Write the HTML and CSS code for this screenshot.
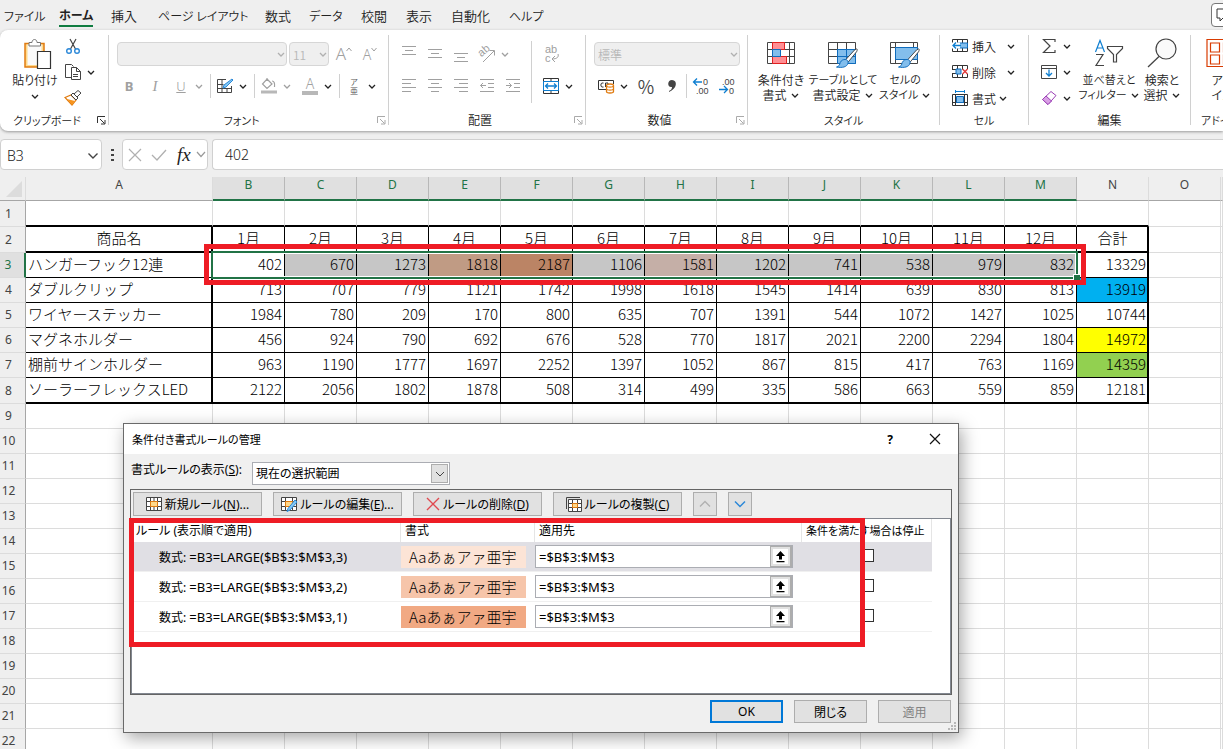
FILE: index.html
```html
<!DOCTYPE html>
<html lang="ja">
<head>
  <meta charset="UTF-8">
  <title>条件付き書式ルールの管理</title>
  <link rel="stylesheet" href="styles.css">
</head>
<body>

  <svg class="defs" aria-hidden="true">
    <symbol id="chev" viewBox="0 0 10 10"><path d="M2 4l3 3 3-3" fill="none" stroke="currentColor" stroke-width="1.3"/></symbol>
    <symbol id="launch" viewBox="0 0 9 9"><path d="M.5 7V.5H8M3 3l4.500 4.500M8 4v4H4" fill="none" stroke="currentColor"/></symbol>
    <symbol id="brush" viewBox="0 0 24 22"><path d="M22 1c1 0 1 1 0 3L13 15l-3-2L20 2z" fill="#fff" stroke="#444"/><path d="M10 12c2 0 4 2 3 4-1 4-6 5-12 4 3-1 3-2 4-5 1-2 3-3 5-3z" fill="#83beec" stroke="#0f6cbd"/></symbol>
    <symbol id="collapse" viewBox="0 0 15 15"><path d="M0 0h15v15H0z" fill="#fff"/><path d="M7.500 2L12 7H9v3.500H6V7H3zM3.500 12h8v1.300h-8z" fill="#000"/></symbol>
  </svg>

  <nav class="tabs">
    <button class="kana">ファイル</button>
    <button class="active kana">ホーム</button>
    <button>挿入</button>
    <button class="kana">ページ レイアウト</button>
    <button>数式</button>
    <button class="kana">データ</button>
    <button>校閲</button>
    <button>表示</button>
    <button>自動化</button>
    <button class="kana">ヘルプ</button>
    <button class="comment" aria-label="コメント">
      <svg width="16" height="14" viewBox="0 0 16 14"><path d="M1 1h14v9H7l-3 3v-3H1z" fill="none" stroke="#333"/></svg>
    </button>
  </nav>

  <section class="ribbon">
    <div class="group clipboard">
      <div class="body">
        <button class="big">
          <svg width="34" height="32" viewBox="0 0 34 32"><path d="M7 8.500h19V32H7z" fill="#ffd98c" stroke="#e07b10" stroke-width="1.500"/><path d="M9.500 9.500h14V30h-14z" fill="#fafafa"/><path d="M11 11V7.500h3c0-4 5-4 5 0h3.500V11z" fill="#fff" stroke="#777"/><path d="M19.500 16.500h13v17h-13z" fill="#fff" stroke="#333" stroke-width="1.200"/></svg>
          <span>貼り付け</span>
          <svg class="chev"><use href="#chev"/></svg>
        </button>
        <div class="stack">
          <div class="line"><button class="ic" aria-label="切り取り"><svg width="16" height="18" viewBox="0 0 16 18"><path d="M5 2l5.500 10M11 2L5.500 12" stroke="#444" stroke-width="1.200"/><circle cx="4" cy="14" r="2.300" fill="none" stroke="#2b88d8" stroke-width="1.400"/><circle cx="12" cy="14" r="2.300" fill="none" stroke="#2b88d8" stroke-width="1.400"/></svg></button></div>
          <div class="line"><button class="ic" aria-label="コピー"><svg width="18" height="18" viewBox="0 0 18 18"><path d="M7 14.500H1.500v-13h6l2 2" fill="none" stroke="#444"/><path d="M7.500 4.500h5l4 4v8h-9zM12.500 4.500v4h4M9 11.500h5M9 13.500h5" fill="none" stroke="#444"/></svg></button><button class="chv" aria-label="コピーの種類"><svg class="chev"><use href="#chev"/></svg></button></div>
          <div class="line"><button class="ic" aria-label="書式のコピー"><svg width="18" height="16" viewBox="0 0 18 16"><path d="M1 7.500L7 5l5 5-4 5z" fill="#fff" stroke="#e07b10" stroke-width="1.200"/><path d="M3 9l8 2-3 4z" fill="#f7941d"/><path d="M7 5l2-2 5 5-2 2zM10 4l4-3.500 3 2.500-4 4z" fill="#fff" stroke="#444"/></svg></button></div>
        </div>
      </div>
      <div class="name kana">クリップボード<button class="launch dark" aria-label="クリップボードの設定"><svg width="9" height="9"><use href="#launch"/></svg></button></div>
    </div>

    <div class="group font">
      <div class="rows">
        <div class="line">
          <div class="combo wide"><select disabled aria-label="フォント"><option></option></select><svg class="chev"><use href="#chev"/></svg></div>
          <div class="combo size"><select disabled aria-label="サイズ"><option>11</option></select><svg class="chev"><use href="#chev"/></svg></div>
          <button class="ic off lt big-a">A<svg width="6" height="5" viewBox="0 0 6 5"><path d="M.5 4L3 1l2.500 3" fill="none" stroke="currentColor"/></svg></button>
          <button class="ic off lt small-a">A<svg width="6" height="5" viewBox="0 0 6 5"><path d="M.5 1L3 4l2.500-3" fill="none" stroke="currentColor"/></svg></button>
        </div>
        <div class="line tools">
          <button class="ic off lt"><b>B</b></button>
          <button class="ic off serif"><i>I</i></button>
          <button class="ic off lt"><u>U</u></button>
          <button class="chv off" aria-label="下線の種類"><svg class="chev"><use href="#chev"/></svg></button>
          <span class="sep"></span>
          <button class="ic" aria-label="罫線"><svg width="18" height="16" viewBox="0 0 18 16"><path d="M10 1.500H1.500v13h14V8M1.500 6.500h6M6 1.500v13M1.500 10.500h14M11 10v4.500" fill="none" stroke="#444"/><path d="M16 1l1 1-7 7-3 1 1-3z" fill="#83c8f4" stroke="#2b88d8"/></svg></button>
          <button class="chv" aria-label="罫線の種類"><svg class="chev"><use href="#chev"/></svg></button>
          <span class="sep"></span>
          <button class="ic off" aria-label="塗りつぶし"><svg width="18" height="18" viewBox="0 0 18 18"><path d="M7 2l5 5-5 4.500L2.500 7zM7 4V1M12 4c2 0 3 2 2.500 6" fill="none" stroke="currentColor" stroke-width="1.200"/><path d="M1 13.500h16v3H1z" fill="#b8b8b8"/></svg></button>
          <button class="chv off" aria-label="塗りつぶしの色"><svg class="chev"><use href="#chev"/></svg></button>
          <button class="ic off lt fontcolor">A</button>
          <button class="chv" aria-label="フォントの色"><svg class="chev"><use href="#chev"/></svg></button>
          <span class="sep"></span>
          <button class="ic ruby"><span>ア</span><span>亜</span></button>
          <button class="chv" aria-label="ふりがなの設定"><svg class="chev"><use href="#chev"/></svg></button>
        </div>
      </div>
      <div class="name kana">フォント<button class="launch" aria-label="フォントの設定"><svg width="9" height="9"><use href="#launch"/></svg></button></div>
    </div>

    <div class="group align">
      <div class="rows">
        <div class="line tools">
          <button class="ic off" aria-label="上揃え"><svg width="16" height="18" viewBox="0 0 16 18"><path d="M1 1.500h14M4 5.500h8M1 9.500h14" stroke="currentColor"/></svg></button>
          <button class="ic off" aria-label="上下中央揃え"><svg width="16" height="18" viewBox="0 0 16 18"><path d="M1 4.500h14M4 8.500h8M1 12.500h14" stroke="currentColor"/></svg></button>
          <button class="ic off" aria-label="下揃え"><svg width="16" height="18" viewBox="0 0 16 18"><path d="M1 8.500h14M4 12.500h8M1 16.500h14" stroke="currentColor"/></svg></button>
          <button class="ic off" aria-label="方向"><svg class="glyphs" width="18" height="18" viewBox="0 0 18 18"><text x="0" y="9" font-size="11" fill="currentColor" transform="rotate(-40 6 6)">ab</text><path d="M5 17L16 6M11.500 5.500h5v5" fill="none" stroke="currentColor"/></svg></button>
          <button class="chv off" aria-label="方向の種類"><svg class="chev"><use href="#chev"/></svg></button>
        </div>
        <div class="line tools">
          <button class="ic off" aria-label="左揃え"><svg width="16" height="16" viewBox="0 0 16 16"><path d="M1 1.500h14M1 5.500h9M1 9.500h14M1 13.500h9" stroke="currentColor"/></svg></button>
          <button class="ic off" aria-label="中央揃え"><svg width="16" height="16" viewBox="0 0 16 16"><path d="M1 1.500h14M4 5.500h8M1 9.500h14M4 13.500h8" stroke="currentColor"/></svg></button>
          <button class="ic off" aria-label="右揃え"><svg width="16" height="16" viewBox="0 0 16 16"><path d="M1 1.500h14M6 5.500h9M1 9.500h14M6 13.500h9" stroke="currentColor"/></svg></button>
          <button class="ic off" aria-label="インデントを減らす"><svg width="16" height="16" viewBox="0 0 16 16"><path d="M1 1.500h14M9 5.500h6M9 9.500h6M1 13.500h14M7 7.500H1.500M4 5L1.500 7.500 4 10" fill="none" stroke="currentColor"/></svg></button>
          <button class="ic off" aria-label="インデントを増やす"><svg width="16" height="16" viewBox="0 0 16 16"><path d="M1 1.500h14M9 5.500h6M9 9.500h6M1 13.500h14M1 7.500h5.500M4 5l2.500 2.500L4 10" fill="none" stroke="currentColor"/></svg></button>
        </div>
      </div>
      <span class="sep tall"></span>
      <div class="rows merge">
        <div class="line"><button class="ic off" aria-label="折り返して全体を表示する"><svg class="glyphs" width="18" height="18" viewBox="0 0 18 18"><text x="3" y="8" font-size="11" fill="currentColor">ab</text><text x="3" y="17" font-size="11" fill="currentColor">c</text><path d="M16 9c1 3-1 5-6 5M13 11l-3 3 3 3" fill="none" stroke="currentColor"/></svg></button></div>
        <div class="line"><button class="ic" aria-label="セルを結合して中央揃え"><svg width="16" height="16" viewBox="0 0 16 16"><path d="M.5.5h15v15H.5zM8 0v4M8 12v4" fill="none" stroke="#333"/><path d="M.5 3.500h15v9H.5z" fill="#fff" stroke="#0f7fd1"/><path d="M2.500 8h11M5 5.500L2.500 8 5 10.500M11 5.500L13.500 8 11 10.500" fill="none" stroke="#0f7fd1" stroke-width="1.300"/></svg></button><button class="chv" aria-label="結合の種類"><svg class="chev"><use href="#chev"/></svg></button></div>
      </div>
      <div class="name">配置<button class="launch" aria-label="配置の設定"><svg width="9" height="9"><use href="#launch"/></svg></button></div>
    </div>

    <div class="group number">
      <div class="rows">
        <div class="line"><div class="combo format"><select disabled aria-label="表示形式"><option>標準</option></select><svg class="chev"><use href="#chev"/></svg></div></div>
        <div class="line">
          <button class="ic" aria-label="通貨表示形式"><svg width="18" height="16" viewBox="0 0 18 16"><path d="M9 11.500H1.500v-9h15V6" fill="none" stroke="#333"/><path d="M6.500 5H5C3.500 5 3.500 9 5 9h1.500M8.500 9V5H11v2" fill="none" stroke="#333"/><path d="M9.500 7.500c0-2 7-2 7 0v6c0 2-7 2-7 0zM9.500 8c1 1.500 6 1.500 7 0M9.500 11c1 1.500 6 1.500 7 0" fill="#fff" stroke="#e07b10" stroke-width="1.300"/></svg></button>
          <button class="chv" aria-label="通貨の種類"><svg class="chev"><use href="#chev"/></svg></button>
          <button class="ic percent">%</button>
          <button class="ic" aria-label="桁区切り"><svg width="10" height="14" viewBox="0 0 10 14"><path d="M5 1c6 0 5 9-3 12v-1c2-1 3-2 3-4-5 1-5-7 0-7z" fill="#444"/></svg></button>
          <span class="sep"></span>
          <button class="ic" aria-label="小数点以下の表示桁数を増やす"><svg class="glyphs" width="18" height="18" viewBox="0 0 18 18"><text x="11" y="8" font-size="9" fill="#444">0</text><text x="4" y="17" font-size="9" fill="#444">.00</text><path d="M1.500 5H10M5 1.500L1.500 5 5 8.500" fill="none" stroke="#0f7fd1" stroke-width="1.300"/></svg></button>
          <button class="ic" aria-label="小数点以下の表示桁数を減らす"><svg class="glyphs" width="18" height="18" viewBox="0 0 18 18"><text x="4" y="8" font-size="9" fill="#444">.00</text><text x="11" y="17" font-size="9" fill="#444">0</text><path d="M1 12.500h8.500M6 9l3.500 3.500L6 16" fill="none" stroke="#0f7fd1" stroke-width="1.300"/></svg></button>
        </div>
      </div>
      <div class="name">数値<button class="launch" aria-label="数値の設定"><svg width="9" height="9"><use href="#launch"/></svg></button></div>
    </div>

    <div class="group style">
      <div class="body">
        <button class="big">
          <svg width="30" height="32" viewBox="0 0 30 32"><path d="M1.500 7.500h27v21h-27zM1.500 14.500h27M1.500 21.500h27M6.500 7.500v21M23.500 7.500v21" fill="#fff" stroke="#444"/><path d="M6.500 7.500h12v7h-12zM6.500 21.500h14v7h-14z" fill="#ff8f94" stroke="#e02020"/><path d="M6.500 14.500h8v7h-8z" fill="#83beec" stroke="#0f6cbd"/></svg>
          <span>条件付き</span><span>書式<svg class="chev"><use href="#chev"/></svg></span>
        </button>
        <button class="big">
          <svg width="32" height="32" viewBox="0 0 32 32"><path d="M1.500 7.500h27v21h-27z" fill="#fff" stroke="#444"/><path d="M10.500 14.500h18v14h-18z" fill="#83beec"/><path d="M1.500 14.500h27M1.500 21.500h27M10.500 7.500v21M19.500 7.500v21" stroke="#444"/><path d="M10.500 14.500h18v14h-18M10.500 21.500h18M10.500 14v14M19.500 14v14" fill="none" stroke="#0f6cbd"/><use href="#brush" x="8" y="13" width="24" height="21"/></svg>
          <span class="kana">テーブルとして</span><span>書式設定<svg class="chev"><use href="#chev"/></svg></span>
        </button>
        <button class="big">
          <svg width="32" height="32" viewBox="0 0 32 32"><path d="M1.500 7.500h27v21h-27zM1.500 12.500h27M6.500 7.500v21M24.500 7.500v5" fill="#fff" stroke="#444"/><path d="M6.500 12.500h22v12h-22z" fill="#83beec" stroke="#0f6cbd"/><use href="#brush" x="8" y="13" width="24" height="21"/></svg>
          <span class="kana">セルの</span><span class="kana">スタイル<svg class="chev"><use href="#chev"/></svg></span>
        </button>
      </div>
      <div class="name kana">スタイル</div>
    </div>

    <div class="group cells">
      <div class="stack">
        <div class="line"><button class="text"><svg width="16" height="16" viewBox="0 0 16 16"><path d="M.5 1.500h15v12H.5zM.5 5.500h15M.5 9.500h15M5.500 1.500v12M10.500 1.500v12" fill="none" stroke="#333"/><path d="M5.500 5h10v5h-10z" fill="#83beec" stroke="#0f6cbd"/><path d="M0 4.500h8v6H0z" fill="#fff"/><path d="M1 7.500h8M4 4.500l-3 3 3 3" fill="none" stroke="#0f7fd1" stroke-width="1.300"/></svg>挿入</button><button class="chv gap" aria-label="挿入の種類"><svg class="chev"><use href="#chev"/></svg></button></div>
        <div class="line"><button class="text"><svg width="16" height="16" viewBox="0 0 16 16"><path d="M.5 5V1.500h15V5M.5 10v3.500h15V10M5.500 1.500v12M10.500 1.500v4M10.500 10v3.500M0 5.500h5M0 9.500h5" fill="none" stroke="#333"/><path d="M4 5h5v5H4z" fill="#83beec" stroke="#0f6cbd"/><path d="M10.500 5l5 5M15.500 5l-5 5" stroke="#e03a3a" stroke-width="1.400"/></svg>削除</button><button class="chv gap" aria-label="削除の種類"><svg class="chev"><use href="#chev"/></svg></button></div>
        <div class="line"><button class="text"><svg width="16" height="16" viewBox="0 0 16 16"><path d="M3.500 0v3M12.500 0v3M3.500 1.500h9" stroke="#0f7fd1"/><path d="M.5 4.500h15v11H.5zM.5 12.500h15M3.500 4.500v11M12.500 4.500v11" fill="none" stroke="#333"/><path d="M4.500 6.500h7v6h-7z" fill="#83beec" stroke="#0f6cbd"/></svg>書式<svg class="chev"><use href="#chev"/></svg></button></div>
      </div>
      <div class="name kana">セル</div>
    </div>

    <div class="group edit">
      <div class="body">
        <div class="stack">
          <div class="line"><button class="ic" aria-label="合計"><svg width="16" height="16" viewBox="0 0 16 16"><path d="M14 4V1.500H2.500L9 8l-6.500 6.500H14V12" fill="none" stroke="#444" stroke-width="1.200"/></svg></button><button class="chv" aria-label="集計の種類"><svg class="chev"><use href="#chev"/></svg></button></div>
          <div class="line"><button class="ic" aria-label="フィル"><svg width="16" height="16" viewBox="0 0 16 16"><path d="M.5 1.500h15v13H.5zM.5 4.500h15" fill="none" stroke="#444"/><path d="M8 5.500V12M5 9l3 3 3-3" fill="none" stroke="#0f7fd1" stroke-width="1.300"/></svg></button><button class="chv" aria-label="フィルの種類"><svg class="chev"><use href="#chev"/></svg></button></div>
          <div class="line"><button class="ic" aria-label="クリア"><svg width="16" height="16" viewBox="0 0 16 16"><path d="M10 1.500l5 4-8 9-5.500-5z" fill="#fff" stroke="#9b3fb5"/><path d="M5 6l5.500 5L7 14.500l-5.500-5z" fill="#d9a0e5" stroke="#9b3fb5"/></svg></button><button class="chv" aria-label="クリアの種類"><svg class="chev"><use href="#chev"/></svg></button></div>
        </div>
        <button class="big">
          <svg width="30" height="32" viewBox="0 0 30 32"><path d="M1.500 17L6 5.500l4.500 11.500M3 13h6" fill="none" stroke="#0f7fd1" stroke-width="1.200"/><path d="M2 19.500h7L2 30.500h8" fill="none" stroke="#444" stroke-width="1.200"/><path d="M13.500 11.500h15v2l-6 6V27h-3v-7.500l-6-6z" fill="#fff" stroke="#444" stroke-width="1.200"/></svg>
          <span class="kana">並べ替えと</span><span class="kana">フィルター<svg class="chev"><use href="#chev"/></svg></span>
        </button>
        <button class="big narrow">
          <svg width="30" height="32" viewBox="0 0 30 32"><circle cx="19" cy="14" r="10" fill="#fafafa" stroke="#444" stroke-width="1.200"/><path d="M12 21.500L1 32" stroke="#444" stroke-width="1.300"/></svg>
          <span>検索と</span><span>選択<svg class="chev"><use href="#chev"/></svg></span>
        </button>
      </div>
      <div class="name">編集</div>
    </div>

    <div class="group addin">
      <div class="body">
        <button class="big">
          <svg width="30" height="32" viewBox="0 0 30 32"><path d="M0 4.500h27v27H0zM3.500 8h9v9h-9zM3.500 20h9v9h-9zM16.500 20h9v9h-9zM16.500 8h9v9h-9z" fill="none" stroke="#d83b01" stroke-width="1.200"/></svg>
          <span>アド</span><span>イン</span>
        </button>
      </div>
      <div class="name kana">アドイン</div>
    </div>
  </section>

  <section class="formula">
    <div class="namebox"><input type="text" value="B3" aria-label="名前ボックス"><svg width="12" height="8" viewBox="0 0 12 8"><path d="M1.500 1.500L6 6l4.500-4.500" fill="none" stroke="#444" stroke-width="1.400"/></svg></div>
    <span class="dots"></span>
    <div class="fx">
      <button aria-label="キャンセル"><svg width="14" height="14" viewBox="0 0 14 14"><path d="M1 1l12 12M13 1L1 13" stroke="#b0b0b0" stroke-width="1.200"/></svg></button>
      <button aria-label="入力"><svg width="16" height="12" viewBox="0 0 16 12"><path d="M1 6l5 5L15 1" fill="none" stroke="#b0b0b0" stroke-width="1.300"/></svg></button>
      <button class="fn"><i>fx</i><svg width="10" height="7" viewBox="0 0 10 7"><path d="M1 1l4 4.500L9 1" fill="none" stroke="#999" stroke-width="1.200"/></svg></button>
    </div>
    <input class="value" type="text" value="402" aria-label="数式バー">
  </section>

  <main class="sheet">
    <table class="grid">
      <colgroup id="cols"></colgroup>
      <thead><tr id="letters"></tr></thead>
      <tbody id="rows"></tbody>
    </table>
    <div class="selection"></div>
    <div class="marker row-marker"></div>
  </main>

  <div class="dialog" role="dialog" aria-labelledby="dialogTitle">
    <header class="titlebar">
      <span class="kana" id="dialogTitle">条件付き書式ルールの管理</span>
      <button class="help">?</button>
      <button class="close" aria-label="閉じる"><svg width="12" height="12" viewBox="0 0 12 12"><path d="M1 1l10 10M11 1L1 11" stroke="#111" stroke-width="1.200"/></svg></button>
    </header>

    <div class="scope">
      <label for="scope">書式ルールの表示(<u>S</u>):</label>
      <div class="picker">
        <select id="scope"><option>現在の選択範囲</option></select>
        <span class="arrow"><svg width="10" height="6" viewBox="0 0 10 6"><path d="M1 1l4 4 4-4" fill="none" stroke="#444"/></svg></span>
      </div>
    </div>

    <div class="frame">
      <div class="toolbar">
        <button><svg width="16" height="15" viewBox="0 0 16 15"><path d="M.5.5h15v13H.5zM.5 4.500h15M.5 9.500h15M4.500.5v13M11.500.5v13M8 .5v4M8 9.500v4" fill="#fff" stroke="#444"/><path d="M4.500 4.500h7v5h-7z" fill="#ffd98c" stroke="#e07b10"/></svg>新規ルール(<u>N</u>)...</button>
        <button><svg width="16" height="15" viewBox="0 0 16 15"><path d="M.5.5h15v13H.5zM.5 4.500h15M.5 9.500h15M4.500.5v13M11.500.5v13" fill="#fff" stroke="#444"/><path d="M4.500 4.500h7v5h-7z" fill="#ffd98c" stroke="#e07b10"/><path d="M14 3l2 2-7 8-3 1.500 1-3z" fill="#83c8f4" stroke="#2b88d8"/></svg>ルールの編集(<u>E</u>)...</button>
        <button><svg width="14" height="14" viewBox="0 0 14 14"><path d="M1 1l12 12M13 1L1 13" stroke="#e04a50" stroke-width="1.400"/></svg>ルールの削除(<u>D</u>)</button>
        <button><svg width="16" height="15" viewBox="0 0 16 15"><path d="M.5 12V.5H14" fill="none" stroke="#444"/><path d="M2.500 2.500h13v12h-13zM2.500 6.500h13M2.500 10.500h13M6.500 2.500v12M11.500 2.500v12" fill="#fff" stroke="#444"/><path d="M6.500 6.500h5v4h-5z" fill="#ffd98c" stroke="#e07b10"/></svg>ルールの複製(<u>C</u>)</button>
        <button class="move" aria-label="上へ移動"><svg width="12" height="8" viewBox="0 0 12 8"><path d="M1 6.500l5-5 5 5" fill="none" stroke="#b0b0b0" stroke-width="1.300"/></svg></button>
        <button class="move" aria-label="下へ移動"><svg width="12" height="8" viewBox="0 0 12 8"><path d="M1 1.500l5 5 5-5" fill="none" stroke="#2b88d8" stroke-width="1.500"/></svg></button>
      </div>
      <div class="list">
        <table class="rules">
          <colgroup><col class="c-rule"><col class="c-format"><col class="c-range"><col class="c-stop"></colgroup>
          <thead>
            <tr><th>ルール (表示順で適用)</th><th>書式</th><th>適用先</th><th class="kana">条件を満たす場合は停止</th></tr>
          </thead>
          <tbody>
            <tr class="current">
              <td class="rule">数式: <span>=B3=LARGE($B$3:$M$3,3)</span></td>
              <td><div class="sample light">Aaあぁアァ亜宇</div></td>
              <td><div class="range"><input type="text" value="=$B$3:$M$3" aria-label="適用先 1"><button aria-label="範囲選択 1"><svg width="15" height="15"><use href="#collapse"/></svg></button></div></td>
              <td class="stop"><input type="checkbox" aria-label="条件を満たす場合は停止 1"></td>
            </tr>
            <tr>
              <td class="rule">数式: <span>=B3=LARGE($B$3:$M$3,2)</span></td>
              <td><div class="sample mid">Aaあぁアァ亜宇</div></td>
              <td><div class="range"><input type="text" value="=$B$3:$M$3" aria-label="適用先 2"><button aria-label="範囲選択 2"><svg width="15" height="15"><use href="#collapse"/></svg></button></div></td>
              <td class="stop"><input type="checkbox" aria-label="条件を満たす場合は停止 2"></td>
            </tr>
            <tr>
              <td class="rule">数式: <span>=B3=LARGE($B$3:$M$3,1)</span></td>
              <td><div class="sample deep">Aaあぁアァ亜宇</div></td>
              <td><div class="range"><input type="text" value="=$B$3:$M$3" aria-label="適用先 3"><button aria-label="範囲選択 3"><svg width="15" height="15"><use href="#collapse"/></svg></button></div></td>
              <td class="stop"><input type="checkbox" aria-label="条件を満たす場合は停止 3"></td>
            </tr>
          </tbody>
        </table>
      </div>
    </div>

    <footer class="actions">
      <button class="ok">OK</button>
      <button>閉じる</button>
      <button disabled>適用</button>
    </footer>
    <svg class="grip" width="9" height="9" viewBox="0 0 9 9"><path d="M7 0h2v2H7zM4 3h2v2H4zM7 3h2v2H7zM1 6h2v2H1zM4 6h2v2H4zM7 6h2v2H7z" fill="#b8b8b8"/></svg>
    <div class="marker rules-marker"></div>
  </div>

  <script src="sheet.js"></script>
</body>
</html>
```

FILE: styles.css
```css
* {
  box-sizing: border-box;
}
body {
  margin: 0;
  height: 100vh;
  overflow: hidden;
  position: relative;
  display: flex;
  flex-direction: column;
  background: #efefef;
  color: #222;
  font-family: "Noto Sans CJK JP", sans-serif;
  font-feature-settings: "palt";
  font-size: 12px;
  font-weight: 350;
}
button, input, select {
  font: inherit;
  font-feature-settings: inherit;
  color: inherit;
  margin: 0;
  padding: 0;
  border: 0;
  background: none;
}
button {
  white-space: nowrap;
}
svg {
  flex: none;
  overflow: visible;
}
.defs {
  position: absolute;
  width: 0;
  height: 0;
}
.kana {
  font-size: 11px;
}

/* tabs */
.tabs {
  display: grid;
  grid-template-columns: 55px 52px 47px 107px 44px 52px 45px 45px 58px 60px 1fr;
  height: 30px;
  padding-left: 4px;
  font-size: 13px;
  flex: none;
}
.tabs button {
  justify-self: start;
  align-self: start;
  height: 27px;
  padding-top: 4px;
}
.tabs .kana {
  font-size: 12px;
}
.tabs .active {
  font-weight: bold;
  border-bottom: 2px solid #107c41;
}
.tabs .comment {
  justify-self: end;
  width: 34px;
  height: 24px;
  margin: 3px -22px 0 0;
  padding: 3px 0 0 4px;
  text-align: left;
  background: #fff;
  border: 1px solid #777;
  border-radius: 4px;
}

/* ribbon */
.ribbon {
  display: flex;
  flex: none;
  height: 101px;
  padding-top: 5px;
  overflow: hidden;
  background: #fff;
  border-radius: 8px 0 0 8px;
  box-shadow: 0 1px 3px #999;
}
.group {
  position: relative;
  flex: none;
  display: flex;
  height: 90px;
  padding-bottom: 15px;
  border-right: 1px solid #d0d0d0;
}
.clipboard { width: 109px; }
.font { width: 280px; }
.align { width: 197px; }
.number { width: 162px; }
.style { width: 192px; }
.cells { width: 89px; }
.edit { width: 162px; }
.addin { width: 80px; border: 0; }
.name {
  position: absolute;
  left: 0;
  right: 0;
  bottom: 0;
  line-height: 10px;
  text-align: center;
}
.clipboard .name, .font .name, .align .name, .number .name {
  padding-right: 14px;
}
.addin .name {
  text-align: left;
  padding-left: 10px;
}
.launch {
  position: absolute;
  right: 2px;
  bottom: 0;
  height: 9px;
  color: #aaa;
}
.launch svg {
  display: block;
}
.launch.dark {
  color: #333;
}
.body {
  display: flex;
}
.style .body {
  padding-left: 2px;
}
.stack {
  display: flex;
  flex-direction: column;
  gap: 4px;
}
.stack .line {
  height: 22px;
}
.line {
  display: flex;
  align-items: center;
}
.rows {
  padding: 3px 0 0 7px;
}
.rows .line {
  height: 32px;
}
.chev {
  width: 10px;
  height: 10px;
}
.chv {
  width: 10px;
  height: 22px;
  display: flex;
  align-items: center;
}
.ic {
  width: 26px;
  height: 22px;
  display: flex;
  align-items: center;
  justify-content: center;
  color: #444;
}
.off {
  color: #a0a0a0;
}
.lt {
  font-family: "Noto Sans", sans-serif;
}
.glyphs {
  font-family: "Liberation Sans", sans-serif;
}
.sep {
  width: 1px;
  height: 24px;
  margin: 0 1px 0 6px;
  background: #d0d0d0;
}
.big {
  width: 62px;
  display: flex;
  flex-direction: column;
  align-items: center;
}
.big > svg:first-child {
  margin-bottom: 5px;
}
.big span {
  display: flex;
  align-items: center;
  line-height: 15px;
}
.big span .chev {
  margin-left: 3px;
}
.clipboard .big {
  width: 60px;
  padding-left: 10px;
}
.clipboard .big > .chev {
  margin-top: 4px;
}
.narrow {
  width: 44px;
}

.combo {
  position: relative;
  height: 24px;
  margin-right: 2px;
}
.combo select {
  appearance: none;
  width: 100%;
  height: 24px;
  padding-left: 3px;
  background: #efefef;
  border: 1px solid #d6d6d6;
  border-radius: 4px;
  color: #b8b8b8;
  opacity: 1;
}
.combo .chev {
  position: absolute;
  right: 1px;
  top: 7px;
  color: #b0b0b0;
}
.combo.wide { width: 170px; margin-left: 1px; }
.combo.size { width: 40px; }
.combo.format { width: 146px; margin-left: 1px; }
.big-a { font-size: 17px; align-items: flex-start; line-height: 22px; }
.small-a { font-size: 14px; align-items: flex-start; line-height: 24px; }
.big-a svg, .small-a svg { margin-top: 4px; }
.tools .ic { font-size: 13px; }
.serif { font-family: "Liberation Serif", serif; }
.tools .serif { font-size: 15px; }
.tools .fontcolor {
  width: 16px;
  height: 18px;
  margin: 0 5px 0 10px;
  font-size: 14px;
  line-height: 12px;
  border-bottom: 4px solid #b8b8b8;
}
.tools .ruby {
  flex-direction: column;
  font-size: 8px;
  line-height: 9px;
  color: #555;
}
.tall {
  height: 62px;
  margin: 6px 6px 0 5px;
}
.merge {
  padding-left: 0;
}
.number .line .percent {
  margin-left: 4px;
  font-size: 18px;
}
.number .sep {
  margin-left: 1px;
}
.cells .stack {
  padding-left: 12px;
}
.text {
  display: flex;
  align-items: center;
  height: 22px;
}
.text svg:first-child {
  margin-right: 4px;
}
.text .chev {
  margin-left: 2px;
}
.gap {
  margin-left: 10px;
}
.edit .stack {
  width: 49px;
  padding-left: 7px;
}

/* formula bar */
.formula {
  display: flex;
  flex: none;
  height: 31px;
  margin: 8px 0 7px;
  font-family: "Noto Sans", sans-serif;
  font-size: 14px;
}
.namebox, .fx, .value {
  background: #fff;
  border: 1px solid #d0d0d0;
  border-radius: 4px;
}
.namebox {
  display: flex;
  align-items: center;
  width: 102px;
  padding: 2px 4px 0 6px;
}
.namebox input {
  width: 80px;
  flex: 1;
}
.dots {
  width: 3px;
  height: 12px;
  margin: 10px 8px 0 9px;
  background: repeating-linear-gradient(#444 0 2px, transparent 2px 5px);
}
.fx {
  display: flex;
  align-items: center;
  width: 86px;
  padding: 0 2px 0 5px;
  gap: 9px;
}
.fx button {
  display: flex;
  align-items: center;
}
.fn i {
  font-family: "Liberation Serif", serif;
  font-size: 19px;
  line-height: 22px;
  margin: 0 5px 0 1px;
}
.value {
  flex: 1;
  min-width: 0;
  margin-left: 4px;
  padding-left: 12px;
  border-right: 0;
  border-radius: 4px 0 0 4px;
}

/* sheet */
.sheet {
  position: relative;
  flex: 1;
  min-height: 0;
  overflow: hidden;
  background: #fff;
}
.grid {
  width: 100%;
  table-layout: fixed;
  border-spacing: 0;
  font-size: 15px;
  font-weight: 300;
  color: #000;
  font-feature-settings: normal;
}
.grid th, .grid td {
  height: 25px;
  padding: 0 2px;
  line-height: 22px;
  overflow: hidden;
  white-space: nowrap;
  border: 0 solid #dcdcdc;
  border-width: 0 1px 1px 0;
}
.grid .tall-row > * {
  height: 26px;
}
.grid th {
  font-family: "Noto Sans", sans-serif;
  font-weight: normal;
  font-size: 12px;
  color: #444;
  background: #efefef;
}
.grid thead th {
  height: 24px;
  padding: 0;
  line-height: 16px;
  vertical-align: top;
  border-bottom-color: #a6a6a6;
}
.grid thead .picked {
  color: #217346;
  background: #e0e0e0;
  border-right-color: #b8b8b8;
  border-bottom: 2px solid #217346;
}
.grid tbody th {
  padding: 0 8px 0 0;
  border-right-color: #a6a6a6;
}
.grid tbody .picked {
  color: #217346;
  background: #e0e0e0;
  border-right: 2px solid #217346;
}
.corner svg {
  display: block;
  margin: 4px 0 0 6px;
}
.col-head { width: 26px; }
.col-a { width: 187px; }
.col { width: 72px; }
.grid .cell {
  padding: 0 2px 2px;
  line-height: 20px;
  border-color: #000;
  text-align: right;
}
.grid .head {
  text-align: center;
}
.grid .item {
  text-align: left;
}
.grid .thick-right {
  border-right-width: 2px;
  padding-right: 1px;
}
.grid .thick-bottom { border-bottom: 2px solid #000; }
.gray { background: #c6c6c6; }
.tan { background: #c5afa7; }
.brown { background: #c09b84; }
.rust { background: #bb8465; }
.blue { background: #00b0f0; }
.yellow { background: #ffff00; }
.green { background: #92d050; }

.selection {
  position: absolute;
  left: 211px;
  top: 74px;
  width: 867px;
  height: 28px;
  border: 2px solid #217346;
  box-shadow: inset 0 0 0 1px #fff;
}
.selection::after {
  content: "";
  position: absolute;
  right: -4px;
  bottom: -4px;
  width: 6px;
  height: 6px;
  background: #217346;
  border: 1px solid #fff;
  border-width: 1px 0 0 1px;
}
.marker {
  position: absolute;
  border: 5px solid #ee1c25;
  pointer-events: none;
}
.row-marker {
  left: 204px;
  top: 67px;
  width: 882px;
  height: 41px;
}

/* dialog */
.dialog {
  position: absolute;
  left: 123px;
  top: 423px;
  width: 836px;
  background: #f0f0f0;
  border: 1px solid #6a6a6a;
  box-shadow: 3px 5px 16px rgba(0, 0, 0, 0.35);
  color: #000;
  font-family: "Noto Sans", "Noto Sans CJK JP", sans-serif;
  font-weight: 400;
}
.titlebar {
  display: flex;
  align-items: center;
  height: 30px;
  padding: 0 17px 0 8px;
  background: #fff;
}
.help {
  margin-left: auto;
  font-weight: bold;
}
.close {
  display: flex;
  margin-left: 36px;
}
.scope {
  display: flex;
  height: 35px;
  padding: 8px 7px 0;
}
.scope label {
  width: 121px;
  line-height: 16px;
}
.picker {
  position: relative;
  width: 198px;
  height: 23px;
}
.picker select {
  appearance: none;
  width: 100%;
  height: 23px;
  padding-left: 3px;
  background: #fff;
  border: 1px solid #abadb3;
}
.arrow {
  position: absolute;
  right: 2px;
  top: 2px;
  width: 17px;
  height: 19px;
  display: flex;
  align-items: center;
  justify-content: center;
  background: #e1e1e1;
  border: 1px solid #adadad;
  pointer-events: none;
}
.frame {
  margin: 0 6px;
  border: 1px solid #646464;
}
.toolbar {
  display: flex;
  gap: 11px;
  padding: 2px;
}
.toolbar button, .actions button {
  display: flex;
  align-items: center;
  justify-content: center;
  background: #e1e1e1;
  border: 1px solid #adadad;
}
.toolbar button {
  width: 129px;
  height: 24px;
}
.toolbar svg {
  margin-right: 3px;
}
.toolbar .move {
  width: 24px;
}
.toolbar .move svg {
  margin: 0;
}
.list {
  height: 176px;
  background: #fff;
  border: 1px solid #828790;
}
.rules {
  table-layout: fixed;
  width: 800px;
  border-spacing: 0;
}
.c-rule { width: 269px; }
.c-format { width: 134px; }
.c-range { width: 267px; }
.c-stop { width: 130px; }
.rules th {
  height: 23px;
  padding: 0 0 0 4px;
  line-height: 22px;
  text-align: left;
  font-weight: inherit;
  white-space: nowrap;
  border-right: 1px solid #e5e5e5;
}
.rules td {
  height: 30px;
  padding: 0;
  border-bottom: 1px solid #f0f0f0;
}
.rules .rule {
  padding-left: 27px;
  white-space: nowrap;
}
.rule span {
  font-size: 13px;
}
.current td {
  background: #e0dfe4;
}
.sample {
  width: 125px;
  height: 22px;
  padding-left: 8px;
  font-family: "Noto Sans CJK JP", sans-serif;
  font-feature-settings: normal;
  font-size: 15px;
  font-weight: 300;
  line-height: 21px;
}
.light { background: #fce4d6; }
.mid { background: #f6c5aa; }
.deep { background: #f1a983; }
.range {
  display: flex;
  width: 258px;
  height: 23px;
  background: #fff;
  border: 1px solid #abadb3;
}
.range input {
  flex: 1;
  min-width: 0;
  padding: 1px 0 0 3px;
  font-size: 13px;
}
.range button {
  display: flex;
  align-items: center;
  justify-content: center;
  width: 22px;
  background: #e1e1e1;
  border: 1px solid #adadad;
  border-right-width: 2px;
}
.rules .stop {
  text-align: center;
  vertical-align: top;
  padding-top: 7px;
}
.stop input {
  appearance: none;
  display: block;
  width: 13px;
  height: 13px;
  margin: 0 auto;
  background: #fff;
  border: 1px solid #333;
}
.actions {
  display: flex;
  justify-content: flex-end;
  gap: 11px;
  padding: 5px 7px 9px;
}
.actions button {
  width: 73px;
  height: 23px;
}
.actions .ok {
  border: 2px solid #0078d7;
}
.actions button:disabled {
  color: #838383;
}
.grip {
  position: absolute;
  right: 2px;
  bottom: 1px;
}
.rules-marker {
  left: 5px;
  top: 94px;
  width: 736px;
  height: 129px;
}
```

FILE: sheet.js
```js
const letters = ['A', 'B', 'C', 'D', 'E', 'F', 'G', 'H', 'I', 'J', 'K', 'L', 'M', 'N', 'O', ''];
const data = {
  2: ['商品名', '1月', '2月', '3月', '4月', '5月', '6月', '7月', '8月', '9月', '10月', '11月', '12月', '合計'],
  3: ['ハンガーフック12連', 402, 670, 1273, 1818, 2187, 1106, 1581, 1202, 741, 538, 979, 832, 13329],
  4: ['ダブルクリップ', 713, 707, 779, 1121, 1742, 1998, 1618, 1545, 1414, 639, 830, 813, 13919],
  5: ['ワイヤーステッカー', 1984, 780, 209, 170, 800, 635, 707, 1391, 544, 1072, 1427, 1025, 10744],
  6: ['マグネホルダー', 456, 924, 790, 692, 676, 528, 770, 1817, 2021, 2200, 2294, 1804, 14972],
  7: ['棚前サインホルダー', 963, 1190, 1777, 1697, 2252, 1397, 1052, 867, 815, 417, 763, 1169, 14359],
  8: ['ソーラーフレックスLED', 2122, 2056, 1802, 1878, 508, 314, 499, 335, 586, 663, 559, 859, 12181]
};
const fills = { E3: 'brown', F3: 'rust', H3: 'tan', N4: 'blue', N6: 'yellow', N7: 'green' };

// last column has no width, it takes what is left of the window
document.getElementById('cols').innerHTML =
  '<col class="col-head"><col class="col-a">' + '<col class="col">'.repeat(14) + '<col>';

const isPicked = i => i >= 1 && i <= 12;

document.getElementById('letters').innerHTML =
  '<th class="corner"><svg width="16" height="16"><path d="M16 0v16H0z" fill="#dcdcdc"/></svg></th>' +
  letters.map((l, i) => `<th class="${isPicked(i) ? 'picked' : ''}">${l}</th>`).join('');

let html = '';
for (let r = 1; r <= 22; r++) {
  const tall = r === 1 || r === 2 || r === 8;
  html += `<tr class="${tall ? 'tall-row' : ''}"><th class="${r === 3 ? 'picked' : ''}">${r}</th>`;
  letters.forEach((l, i) => {
    const cls = [];
    if (data[r] && i < 14) {
      cls.push('cell');
      if (r === 2) cls.push('head');
      else if (i === 0) cls.push('item');
      if (i === 0 || i === 13) cls.push('thick-right');
      if (fills[l + r]) cls.push(fills[l + r]);
      else if (r === 3 && i > 1 && isPicked(i)) cls.push('gray');
    }
    if (i < 14 && tall) cls.push('thick-bottom');
    html += `<td class="${cls.join(' ')}">${data[r] && i < 14 ? data[r][i] : ''}</td>`;
  });
  html += '</tr>';
}
document.getElementById('rows').innerHTML = html;
```
